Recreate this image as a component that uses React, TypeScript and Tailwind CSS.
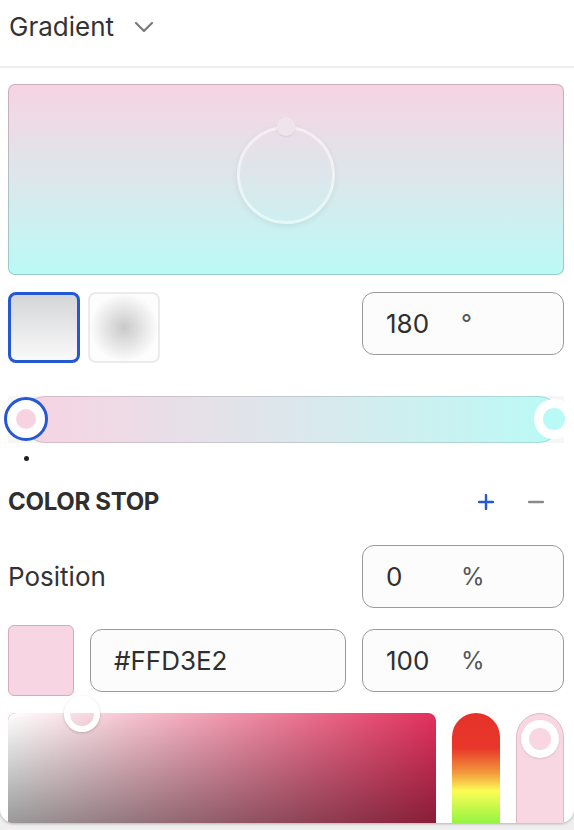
import React from 'react';

const font = { fontFamily: 'Inter, "Noto Sans", sans-serif' };

function UnitInput({ value, unit }: { value: string; unit: string }) {
  return (
    <div className="flex h-[63px] w-[202px] items-center rounded-[12px] border border-[#9a9a9a] bg-[#fcfcfc] pl-[23px] text-[26px] text-[#2f2f2f]">
      <span className="w-[75px]">{value}</span>
      <span className="text-[24px] text-[#555]">{unit}</span>
    </div>
  );
}

export default function App() {
  return (
    <div className="min-h-[830px] bg-[#efefef]" style={font}>
      <div className="h-[823px] overflow-hidden rounded-b-[14px] bg-white shadow-[0_1px_3px_rgba(0,0,0,0.25)]">
        {/* header */}
        <div className="flex h-[66px] items-center pb-[14px] pl-[9px]">
          <span className="text-[26px] text-[#333]">Gradient</span>
          <svg className="ml-[20px] mt-[2px]" width="20" height="12" viewBox="0 0 20 12" fill="none">
            <polyline points="2,2 10,10 18,2" stroke="#7a7a7a" strokeWidth="2.2" strokeLinecap="round" strokeLinejoin="round" />
          </svg>
        </div>
        <div className="h-[2px] bg-[#ececec]" />

        <div className="pl-2 pr-[10px] pt-4">
          {/* preview */}
          <div className="relative flex h-[191px] items-center justify-center rounded-[7px] bg-gradient-to-b from-[#f7d3e2] to-[#b9faf6] shadow-[inset_0_0_0_1px_rgba(0,0,0,0.18)]">
            <div className="relative mb-[10px] h-[98px] w-[98px] rounded-full border-[3px] border-white/50 shadow-[0_2px_6px_rgba(0,0,0,0.07)]">
              <div className="absolute left-1/2 top-[-12px] h-[19px] w-[19px] -translate-x-1/2 rounded-full bg-[#efe3ec] shadow-[0_1px_2px_rgba(0,0,0,0.08)]" />
            </div>
          </div>

          {/* type swatches + angle */}
          <div className="mt-[17px] flex items-start justify-between">
            <div className="flex gap-2">
              <div className="h-[71px] w-[72px] rounded-[8px] border-[3px] border-[#2459d3] bg-gradient-to-b from-[#d4d5d7] to-[#fafafa]" />
              <div className="h-[71px] w-[72px] rounded-[8px] border-2 border-[#ebebeb] bg-[radial-gradient(circle,#c9c9c9_0%,#fdfdfd_72%)]" />
            </div>
            <UnitInput value="180" unit="°" />
          </div>

          {/* gradient slider */}
          <div className="relative mt-[33px] h-[47px] bg-[#f6f6f6]">
            <div className="absolute inset-y-0 left-[14px] right-[2px] rounded-full bg-gradient-to-r from-[#f7d3e2] to-[#b9faf6] shadow-[inset_0_0_0_1px_rgba(0,0,0,0.12)]" />
            <div className="absolute left-[-4px] top-[1px] flex h-[44px] w-[44px] items-center justify-center rounded-full border-[3px] border-[#2459d3] bg-white">
              <div className="h-[20px] w-[20px] rounded-full bg-[#f7d3e2]" />
            </div>
            <div className="absolute left-[526px] top-[3px] flex h-[40px] w-[40px] items-center justify-center rounded-full bg-white">
              <div className="h-[22px] w-[22px] rounded-full bg-[#b9faf6]" />
            </div>
          </div>
          <div className="ml-[16px] mt-[13px] h-[5px] w-[5px] rounded-full bg-[#222]" />

          {/* color stop header */}
          <div className="mt-[26px] flex h-[30px] items-center justify-between">
            <span className="text-[24px] font-bold tracking-[-0.3px] text-[#2f2f2f]">COLOR STOP</span>
            <div className="mr-[20px] flex items-center gap-[34px]">
              <svg width="16" height="16" viewBox="0 0 16 16">
                <path d="M8 1v14M1 8h14" stroke="#2459d3" strokeWidth="2.4" strokeLinecap="round" />
              </svg>
              <svg width="16" height="16" viewBox="0 0 16 16">
                <path d="M1 8h14" stroke="#8a8a8a" strokeWidth="2.4" strokeLinecap="round" />
              </svg>
            </div>
          </div>

          {/* position */}
          <div className="mt-[28px] flex items-center justify-between">
            <span className="text-[26px] text-[#333]">Position</span>
            <UnitInput value="0" unit="%" />
          </div>

          {/* color */}
          <div className="mt-[17px] flex items-center gap-4">
            <div className="h-[71px] w-[66px] rounded-[6px] border border-[#d4abba] bg-[#f8d5e2]" />
            <div className="flex h-[63px] w-[256px] items-center rounded-[12px] border border-[#9a9a9a] bg-[#fcfcfc] pl-[23px] text-[26px] text-[#2f2f2f]">
              #FFD3E2
            </div>
            <UnitInput value="100" unit="%" />
          </div>

          {/* pickers */}
          <div className="mt-[17px] flex gap-4">
            <div className="relative h-[275px] w-[428px] rounded-[8px] bg-[#e3305d]">
              <div className="absolute inset-0 rounded-[8px] bg-gradient-to-r from-white to-transparent" />
              <div className="absolute inset-0 rounded-[8px] bg-gradient-to-b from-transparent to-black" />
              <div className="absolute left-[56px] top-[-17px] h-[36px] w-[36px] rounded-full border-[6px] border-white shadow-[0_1px_3px_rgba(0,0,0,0.2)]" />
            </div>
            <div className="h-[275px] w-[48px] rounded-t-full bg-[linear-gradient(to_bottom,#e6332a_0px,#e8362a_35px,#f39a3c_60px,#fcfc55_78px,#9af542_108px,#4cf04a_160px)]" />
            <div className="relative h-[275px] w-[48px] rounded-t-full border border-[#dcbcc9] bg-[#f8d7e3]">
              <div className="absolute left-[4px] top-[6px] flex h-[38px] w-[38px] items-center justify-center rounded-full bg-white shadow-[0_1px_2px_rgba(0,0,0,0.12)]">
                <div className="h-[22px] w-[22px] rounded-full bg-[#f8d7e3]" />
              </div>
            </div>
          </div>
        </div>
      </div>
    </div>
  );
}
